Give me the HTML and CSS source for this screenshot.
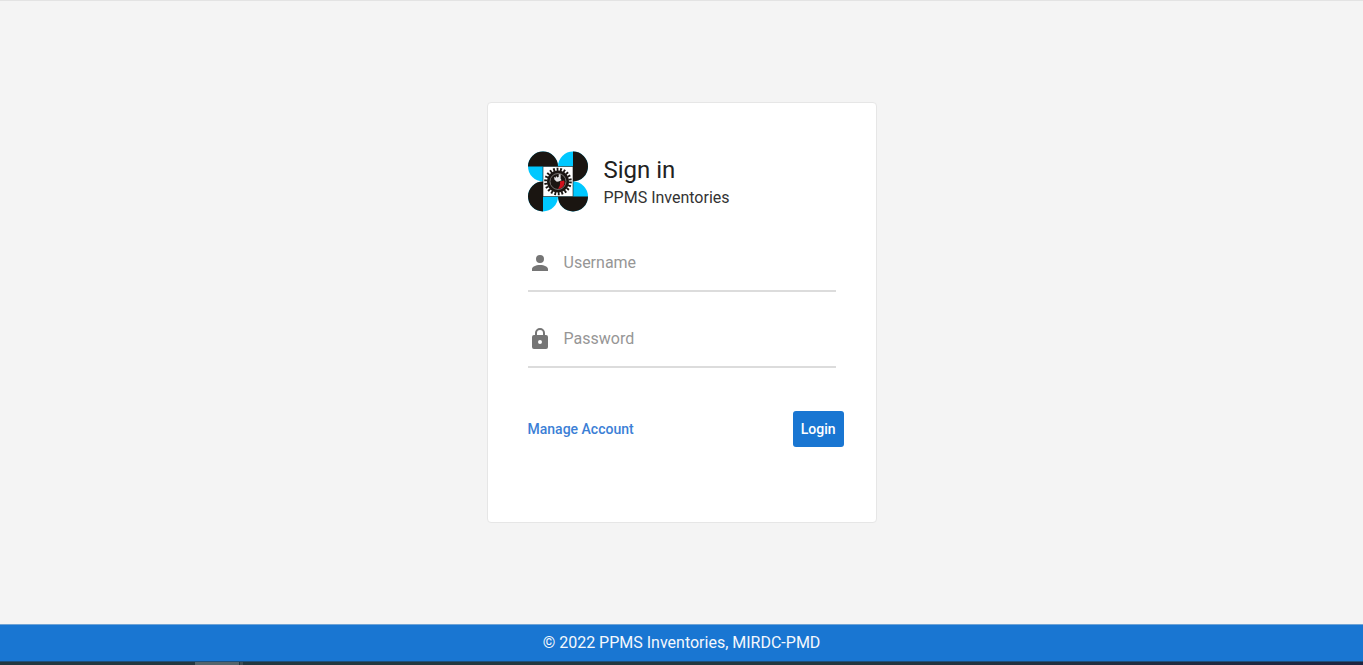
FILE: index.html
```html
<!DOCTYPE html>
<html lang="en">
<head>
<meta charset="utf-8">
<meta name="viewport" content="width=device-width, initial-scale=1">
<title>PPMS Inventories</title>
<link rel="stylesheet" href="styles.css">
</head>
<body class="page">
<main class="content">
  <form class="card">
    <header class="brand">
      <svg class="logo" viewBox="0 0 60 60" aria-hidden="true">
        <g fill="#00c8ff">
          <circle cx="15" cy="15" r="15"/><circle cx="45" cy="15" r="15"/>
          <circle cx="15" cy="45" r="15"/><circle cx="45" cy="45" r="15"/>
        </g>
        <g fill="#1a1511">
          <path d="M0 15a15 15 0 0 1 30 0z"/>
          <path d="M45 0a15 15 0 0 1 0 30z"/>
          <path d="M15 30a15 15 0 0 0 0 30z"/>
          <path d="M30 45a15 15 0 0 0 30 0z"/>
        </g>
        <path d="M15 15h30v30H15z" fill="#fff" stroke="#1a1511" stroke-width=".6"/>
        <circle cx="30" cy="30" r="12.2" fill="none" stroke="#1a1511" stroke-width="3.2" stroke-dasharray="1.800 1.684"/>
        <circle cx="30" cy="30" r="11" fill="#1a1511"/>
        <circle cx="30" cy="30" r="8" fill="#1a1511" stroke="#8a8784" stroke-width=".8"/>
        <path d="M32 30l4-1c1.500 3-.5 7-4 8l-2 .2c1.800-2 2.300-4.400 2-7.200z" fill="#d0101c"/>
        <path d="M26 25.500l1.700.8.4-1.800 1.400 1.500 1.200-.8V22.800h1.900v4.500l1 1.400-3 1.200-1.800.4-2.300-2z" fill="#e4e4e4"/>
      </svg>
      <div class="titles">
        <h1 class="title">Sign in</h1>
        <p class="subtitle">PPMS Inventories</p>
      </div>
    </header>
    <div class="field">
      <label class="field-label" for="username" aria-label="Username">
        <svg class="icon" viewBox="0 0 24 24" aria-hidden="true"><path d="M12 4a4 4 0 1 1 0 8 4 4 0 0 1 0-8m0 10c4.420 0 8 1.790 8 4v2H4v-2c0-2.210 3.580-4 8-4z"/></svg>
      </label>
      <input class="input" id="username" type="text" placeholder="Username">
    </div>
    <div class="field">
      <label class="field-label" for="password" aria-label="Password">
        <svg class="icon" viewBox="0 0 24 24" aria-hidden="true"><path d="M12 17a2 2 0 1 0 0-4 2 2 0 0 0 0 4m6-9a2 2 0 0 1 2 2v10a2 2 0 0 1-2 2H6a2 2 0 0 1-2-2V10a2 2 0 0 1 2-2h1V6a5 5 0 0 1 10 0v2h1m-6-5a3 3 0 0 0-3 3v2h6V6a3 3 0 0 0-3-3z"/></svg>
      </label>
      <input class="input" id="password" type="password" placeholder="Password">
    </div>
    <div class="actions">
      <a class="link" href="#account">Manage Account</a>
      <button class="button" type="button">Login</button>
    </div>
  </form>
</main>
<footer class="footer">© 2022 PPMS Inventories, MIRDC-PMD</footer>
<div class="taskbar"><span class="task"></span><span class="task-edge"></span></div>
</body>
</html>
```
FILE: styles.css
```css
* {
  box-sizing: border-box;
}

.page {
  display: flex;
  flex-direction: column;
  min-height: 100vh;
  margin: 0;
  border-top: 1px solid #e3e3e3;
  background: #f4f4f4;
  color: #212121;
  font: 16px/24px Roboto, sans-serif;
}

.content {
  flex: 1;
  display: flex;
  align-items: center;
  justify-content: center;
}

.card {
  width: 100%;
  max-width: 390px;
  padding: 48px 40px 75px;
  border: 1px solid #e6e6e6;
  border-radius: 4px;
  background: #fff;
}

.brand {
  display: flex;
  align-items: center;
  gap: 16px;
  margin-bottom: 24px;
}

.logo {
  width: 60px;
  height: 61px;
}

.title {
  margin: 0;
  font-size: 24px;
  font-weight: 400;
  line-height: 32px;
}

.subtitle {
  margin: 0;
  color: #333;
}

.field {
  display: flex;
  align-items: center;
  gap: 12px;
  height: 56px;
  margin-bottom: 20px;
  border-bottom: 2px solid #dcdcdc;
}

.field-label {
  display: flex;
}

.icon {
  width: 24px;
  height: 24px;
  fill: #757575;
}

.input {
  flex: 1;
  min-width: 0;
  padding: 0;
  border: 0;
  outline: 0;
  background: none;
  color: inherit;
  font: inherit;
}

.input::placeholder {
  color: #969696;
}

.actions {
  display: flex;
  align-items: center;
  justify-content: space-between;
  margin: 43px -8px 0 0;
}

.link {
  color: #3c7fd6;
  font-size: 14px;
  font-weight: 500;
  text-decoration: none;
}

.button {
  height: 36px;
  padding: 0 8px;
  border: 0;
  border-radius: 3px;
  background: #1976d2;
  color: #fff;
  font: 500 14px/20px Roboto, sans-serif;
}

.footer {
  padding: 6px 16px;
  border-top: 1px solid #6fa3d5;
  background: #1976d2;
  color: #f4f8fd;
  text-align: center;
}

.taskbar {
  display: flex;
  gap: 1px;
  height: 4px;
  padding-left: 195px;
  border-top: 1px solid #1d4f7c;
  background: linear-gradient(90deg, #213740, #22373f 60%, #1d2440);
}

.task {
  width: 44px;
  background: #53646c;
}

.task-edge {
  width: 3px;
  background: #3c4e57;
}
```
